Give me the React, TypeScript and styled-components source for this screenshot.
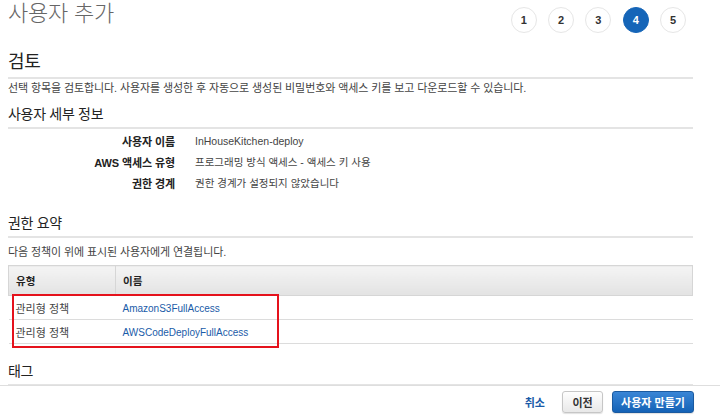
import React from "react";
import styled, { createGlobalStyle } from "styled-components";

const GlobalStyle = createGlobalStyle`
  html, body { margin: 0; padding: 0; background: #fff; }
  body {
    font-family: "Liberation Sans", "Noto Sans CJK KR", Arial, sans-serif;
    color: #444;
  }
  * { box-sizing: border-box; }
`;

const Shell = styled.div`
  height: 100vh;
  display: flex;
  flex-direction: column;
  overflow: hidden;
`;

const Main = styled.main`
  flex: 1;
  min-height: 0;
  overflow: hidden;
  padding: 0 27px 0 8px;
`;

const Header = styled.header`
  height: 40px;
  display: flex;
  align-items: flex-start;
  justify-content: space-between;
`;

const Title = styled.h1`
  margin: 0;
  padding-top: 1px;
  font-size: 22px;
  line-height: 26px;
  font-weight: 300;
  color: #666;
  letter-spacing: -0.2px;
`;

const Steps = styled.ol`
  list-style: none;
  margin: 7px 7px 0 0;
  padding: 0;
  display: flex;
  gap: 11.3px;
`;

const Step = styled.li<{ $active?: boolean }>`
  width: 26px;
  height: 26px;
  border-radius: 50%;
  display: flex;
  align-items: center;
  justify-content: center;
  font-size: 11px;
  font-weight: bold;
  color: ${(p) => (p.$active ? "#fff" : "#333")};
  background: ${(p) => (p.$active ? "#1565b8" : "#fff")};
  border: 1px solid ${(p) => (p.$active ? "#1565b8" : "#e6e6e6")};
`;

const SectionTitle = styled.h2<{ $size: number; $top: number }>`
  margin: ${(p) => p.$top}px 0 0;
  padding-bottom: 4px;
  font-size: ${(p) => p.$size}px;
  line-height: ${(p) => p.$size + 4}px;
  font-weight: normal;
  color: #222;
  letter-spacing: -0.3px;
  border-bottom: 2px solid #e4e4e4;
`;

const Desc = styled.p<{ $top: number }>`
  margin: ${(p) => p.$top}px 0 0;
  font-size: 11px;
  line-height: 16px;
  color: #444;
  letter-spacing: -0.1px;
`;

const Details = styled.dl`
  margin: 1px 0 0;
  display: grid;
  grid-template-columns: 167px 1fr;
  column-gap: 20px;
  grid-auto-rows: 21px;
  align-items: center;
`;

const Label = styled.dt`
  text-align: right;
  font-size: 11px;
  font-weight: bold;
  color: #222;
  letter-spacing: -0.1px;
`;

const Value = styled.dd`
  margin: 0;
  font-size: 10.5px;
  color: #444;
`;

const TableWrap = styled.div`
  position: relative;
  margin-top: 5px;
`;

const Table = styled.table`
  width: 100%;
  border-collapse: collapse;
  font-size: 11px;
`;

const Th = styled.th<{ $w?: number }>`
  width: ${(p) => (p.$w ? `${p.$w}px` : "auto")};
  height: 30px;
  padding: 0 7px;
  text-align: left;
  font-size: 10.5px;
  font-weight: bold;
  color: #222;
  background: linear-gradient(#f4f4f4, #e3e3e3);
  border: 1px solid #d6d6d6;
`;

const Td = styled.td`
  height: 24px;
  padding: 0 7px;
  border-bottom: 1px solid #dcdcdc;
  color: #444;
`;

const Link = styled.a`
  font-size: 10px;
  color: #1a5ba8;
  text-decoration: none;
`;

const Highlight = styled.div`
  position: absolute;
  left: 4px;
  top: 29px;
  width: 267px;
  height: 54px;
  border: 2px solid #e5121c;
  pointer-events: none;
`;

const Footer = styled.footer`
  height: 32px;
  border-top: 1px solid #dedede;
  display: flex;
  align-items: center;
  justify-content: flex-end;
  padding-right: 26px;
  background: #fff;
`;

const CancelLink = styled.a`
  font-size: 11px;
  font-weight: bold;
  color: #1a5ba8;
  margin-right: 17px;
`;

const Button = styled.button<{ $primary?: boolean }>`
  height: 22px;
  width: ${(p) => (p.$primary ? 82 : 41)}px;
  margin-left: ${(p) => (p.$primary ? 9 : 0)}px;
  padding: 0;
  border-radius: 3px;
  font-family: inherit;
  font-size: 11px;
  font-weight: bold;
  color: ${(p) => (p.$primary ? "#fff" : "#333")};
  background: ${(p) =>
    p.$primary
      ? "linear-gradient(#3a86d6, #1462b6)"
      : "linear-gradient(#fefefe, #e8e8e8)"};
  border: 1px solid ${(p) => (p.$primary ? "#1a5aa0" : "#c6c6c6")};
  box-shadow: 0 1px 1px rgba(0, 0, 0, 0.12);
`;

const details = [
  ["사용자 이름", "InHouseKitchen-deploy"],
  ["AWS 액세스 유형", "프로그래밍 방식 액세스 - 액세스 키 사용"],
  ["권한 경계", "권한 경계가 설정되지 않았습니다"],
];

const policies = ["AmazonS3FullAccess", "AWSCodeDeployFullAccess"];

export default function App() {
  return (
    <>
      <GlobalStyle />
      <Shell>
        <Main>
          <Header>
            <Title>사용자 추가</Title>
            <Steps>
              {[1, 2, 3, 4, 5].map((n) => (
                <Step key={n} $active={n === 4}>
                  {n}
                </Step>
              ))}
            </Steps>
          </Header>

          <SectionTitle $size={18} $top={11}>검토</SectionTitle>
          <Desc $top={1}>
            선택 항목을 검토합니다. 사용자를 생성한 후 자동으로 생성된 비밀번호와 액세스 키를 보고 다운로드할 수 있습니다.
          </Desc>

          <SectionTitle $size={14} $top={9}>사용자 세부 정보</SectionTitle>
          <Details>
            {details.map(([k, v]) => (
              <React.Fragment key={k}>
                <Label>{k}</Label>
                <Value>{v}</Value>
              </React.Fragment>
            ))}
          </Details>

          <SectionTitle $size={14} $top={21}>권한 요약</SectionTitle>
          <Desc $top={6}>다음 정책이 위에 표시된 사용자에게 연결됩니다.</Desc>

          <TableWrap>
            <Table>
              <thead>
                <tr>
                  <Th $w={107}>유형</Th>
                  <Th>이름</Th>
                </tr>
              </thead>
              <tbody>
                {policies.map((p) => (
                  <tr key={p}>
                    <Td>관리형 정책</Td>
                    <Td>
                      <Link href="#">{p}</Link>
                    </Td>
                  </tr>
                ))}
              </tbody>
            </Table>
            <Highlight />
          </TableWrap>

          <SectionTitle $size={14} $top={18}>태그</SectionTitle>
        </Main>
        <Footer>
          <CancelLink>취소</CancelLink>
          <Button>이전</Button>
          <Button $primary>사용자 만들기</Button>
        </Footer>
      </Shell>
    </>
  );
}
